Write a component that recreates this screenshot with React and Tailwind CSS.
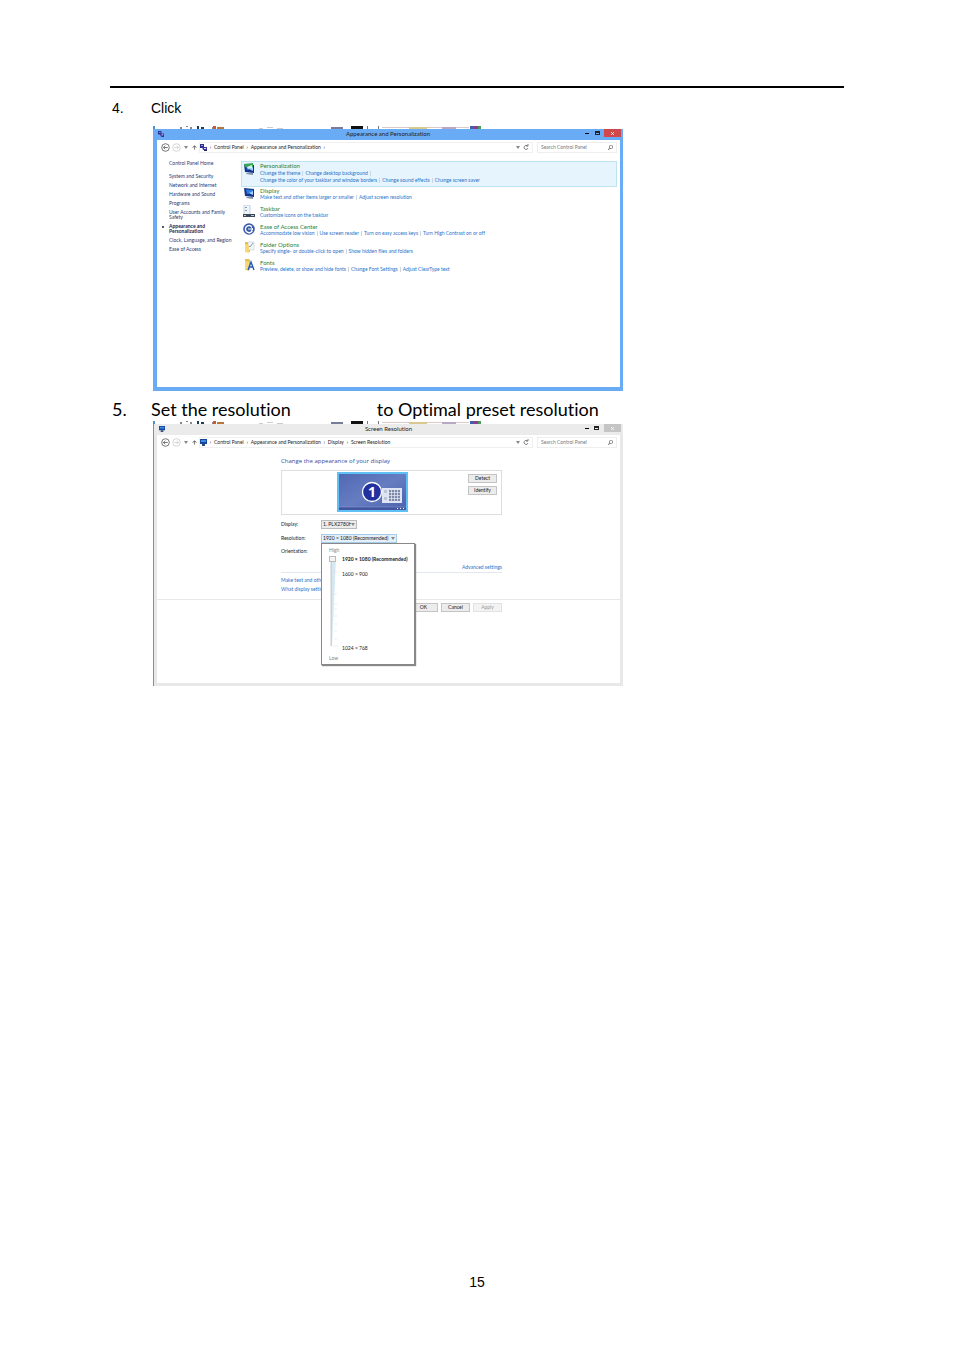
import { FaArrowUp, FaSearch } from "react-icons/fa";

const DesktopStrip = () => (
  <svg viewBox="0 0 470 3" preserveAspectRatio="none" className="block h-[3px] w-full">
    <rect width="470" height="3" fill="#fff" />
    <rect width="2" height="3" fill="#4d8fd0" />
    <path d="M27 1h2v2h-2zM33 0h2v1h-2zM37 1h2v2h-2zM59 1h2v2h-2z" fill="#888" />
    <path d="M44 0h2v3h-2zM48 1h3v2h-3z" fill="#1c3f52" />
    <path d="M60 0h3v3h-3z" fill="#d8572a" />
    <path d="M64 1h7v2h-7z" fill="#b8763c" />
    <path d="M106 2h4v1h-4zM114 1h6v1h-6zM124 2h6v1h-6z" fill="#ccc" />
    <path d="M178 1h12v2h-12z" fill="#777c9a" />
    <path d="M198 0h12v3h-12z" fill="#111" />
    <path d="M214 0h1v3h-1zM225 0h1v3h-1z" fill="#777" />
    <path d="M229 1h87v1h-87z" fill="#dcc9c9" />
    <path d="M256 1h18v2h-18z" fill="#d9c98f" />
    <path d="M289 1h14v2h-14z" fill="#b9a7c4" />
    <path d="M317 0h4v3h-4z" fill="#3d62a8" />
    <path d="M321 0h4v3h-4z" fill="#8b3c95" />
    <path d="M325 0h3v3h-3z" fill="#4c9a58" />
  </svg>
);

const MonitorIcon = ({ swirl }) => (
  <svg viewBox="0 0 12 12" className="size-full">
    <path d="M1 1 11 2v8L2 9z" fill="#12348c" />
    <path d="M3 2.500 10 3v3L4 7z" fill="#2f7fe0" />
    <path d="M6 6l4-2v4z" fill="#9fd0ff" />
    {swirl && <path d="M1 1 10 0v4L6 5 2 4z" fill="#3aa655" />}
    {swirl && <path d="M4 4l5-2v3L5 6z" fill="#d7f0ff" />}
    <path d="M4 10l6 0v2L3 11z" fill="#8292a8" />
  </svg>
);

const PanelIcon = () => (
  <svg viewBox="0 0 7 7" className="size-full">
    <path d="M0 0h4v4H0z" fill="#2b2f86" />
    <path d="M1 1h2v1H1z" fill="#8f9be0" />
    <path d="M2 3h5v3H3z" fill="#41379a" />
    <path d="M4 4h2v1H4z" fill="#d5d7f5" />
    <path d="M4 6h3v1H4z" fill="#26265e" />
  </svg>
);

const ScreenIcon = () => (
  <svg viewBox="0 0 7 7" className="size-full">
    <path d="M0 0h7v5H0z" fill="#17479e" />
    <path d="M1 1h5v2H1z" fill="#3d8ce0" />
    <path d="M2 5h3v2H2z" fill="#35506e" />
  </svg>
);

const TaskbarIcon = () => (
  <svg viewBox="0 0 12 12" className="size-full">
    <path d="M1 0h6v10H1z" fill="#f1f5f9" stroke="#a9b5c4" strokeWidth=".6" />
    <path d="M2 2h2v1H2zM2 5h2v1H2z" fill="#6f9fd4" />
    <path d="M0 9h12v3H0z" fill="#3c4757" />
    <path d="M1 10h2v1H1zM8 10h3v1H8z" fill="#b9c6d6" />
  </svg>
);

const EaseIcon = () => (
  <svg viewBox="0 0 12 12" className="size-full">
    <circle cx="6" cy="6" r="5.800" fill="#3558a8" />
    <path d="M8.800 3.800A3.600 3.600 0 1 0 9.400 7.400" fill="none" stroke="#fff" strokeWidth="1.400" />
    <path d="M5 6h5M8 4.400 10 6 8 7.600" fill="none" stroke="#fff" />
  </svg>
);

const FolderIcon = () => (
  <svg viewBox="0 0 12 12" className="size-full">
    <path d="M2 1h4l1 1v9H2z" fill="#e8c04f" />
    <path d="M5 1h6v8H5z" fill="#f4f6f8" stroke="#b5bdc6" strokeWidth=".5" />
    <path d="M6 5 7 6 10 2" fill="none" stroke="#7b9fcc" />
    <path d="M2 3l4 1v8L2 11z" fill="#f5d978" />
  </svg>
);

const FontsIcon = () => (
  <svg viewBox="0 0 12 12" className="size-full">
    <path d="M2 0h4l1 1v10H2z" fill="#e8c04f" />
    <path d="M2 2l4 1v9L2 11z" fill="#f5d978" />
    <path d="M5 11 8 3 11 11M6 8h4" fill="none" stroke="#2559b5" strokeWidth="1.400" />
  </svg>
);

const BackIcon = ({ className }) => (
  <svg viewBox="0 0 9 9" className={className} fill="none" stroke="currentColor" strokeWidth=".8">
    <circle cx="4.500" cy="4.500" r="3.800" />
    <path d="M6.800 4.500H2.400M4.200 2.700 2.400 4.500l1.800 1.800" />
  </svg>
);

const Caret = () => (
  <svg viewBox="0 0 4 3" className="h-[3px] w-1 shrink-0">
    <path d="M0 0h4L2 3z" fill="#888" />
  </svg>
);

const TitleBar = ({ title, icon, className, closeClass }) => (
  <div className={`grid h-[11px] grid-cols-3 items-start ${className}`}>
    <span className="mt-[2px] ml-[5px] size-[6px]">{icon}</span>
    <h2 className="text-center text-[6px] leading-[9px] text-[#222]">{title}</h2>
    <div className="mr-[2px] flex justify-end">
      <button aria-label="Minimize" className="flex h-2 w-[10px] items-end justify-center pb-[3px]">
        <span className="h-px w-1 bg-black" />
      </button>
      <button aria-label="Maximize" className="flex h-2 w-[10px] items-center justify-center">
        <span className="h-1 w-[5px] border border-t-2 border-[#222]" />
      </button>
      <button aria-label="Close" className={`ml-[2px] flex h-2 w-[17px] items-center justify-center text-white ${closeClass}`}>
        <svg viewBox="0 0 4 4" className="size-[3px]" stroke="currentColor"><path d="M0 0l4 4M4 0 0 4" /></svg>
      </button>
    </div>
  </div>
);

const AddressBar = ({ path, icon, trailing }) => (
  <div className="flex h-[14px] items-center pr-[3px] pl-1 text-[5px] leading-[7px] text-[#222]">
    <button aria-label="Back"><BackIcon className="size-[9px] text-[#555]" /></button>
    <button aria-label="Forward" className="ml-[2px]"><BackIcon className="size-[9px] rotate-180 text-[#ccc]" /></button>
    <button aria-label="Recent pages" className="ml-[3px]"><Caret /></button>
    <button aria-label="Up" className="ml-1"><FaArrowUp className="size-[5px] text-[#666]" /></button>
    <div className="ml-[2px] flex h-[11px] grow items-center border border-[#f0f0f0]">
      <span className="size-[7px]">{icon}</span>
      <nav className="flex grow items-center">
        {path.map((item) => (
          <span key={item} className="flex items-center">
            <span className="w-[7px] text-center">›</span>
            <a href="#" className="whitespace-nowrap">{item}</a>
          </span>
        ))}
        {trailing && <span className="w-[7px] text-center">›</span>}
      </nav>
      <Caret />
      <button aria-label="Refresh" className="mx-[3px]">
        <svg viewBox="0 0 6 6" className="size-[6px]" fill="none" stroke="#666" strokeWidth=".8">
          <path d="M4.500 2A2 2 0 1 0 5 4M5 0v2H3" />
        </svg>
      </button>
    </div>
    <label className="ml-1 flex h-[11px] w-20 items-center border border-[#eee] px-[3px]">
      <input aria-label="Search Control Panel" placeholder="Search Control Panel" className="w-0 grow placeholder:text-[#777]" />
      <FaSearch className="size-[5px] -scale-x-100 text-[#777]" />
    </label>
  </div>
);

const sideLinks = [
  "System and Security",
  "Network and Internet",
  "Hardware and Sound",
  "Programs",
  "User Accounts and Family Safety",
  "Appearance and Personalization",
  "Clock, Language, and Region",
  "Ease of Access",
];

const categories = [
  { name: "Display", icon: <MonitorIcon />, links: ["Make text and other items larger or smaller", "Adjust screen resolution"] },
  { name: "Taskbar", icon: <TaskbarIcon />, links: ["Customize icons on the taskbar"] },
  { name: "Ease of Access Center", icon: <EaseIcon />, links: ["Accommodate low vision", "Use screen reader", "Turn on easy access keys", "Turn High Contrast on or off"] },
  { name: "Folder Options", icon: <FolderIcon />, links: ["Specify single- or double-click to open", "Show hidden files and folders"] },
  { name: "Fonts", icon: <FontsIcon />, links: ["Preview, delete, or show and hide fonts", "Change Font Settings", "Adjust ClearType text"] },
];

const LinkRow = ({ links, open }) => (
  <div className="flex text-[5px] leading-[7px] whitespace-nowrap text-[#2a72c8]">
    {links.map((link, i) => (
      <span key={link} className="flex items-center">
        <a href="#">{link}</a>
        {(open || i < links.length - 1) && <span className="mx-[2px] h-[5px] w-px bg-[#ccd6e0]" />}
      </span>
    ))}
  </div>
);

const AppearanceWindow = () => (
  <div className="w-full max-w-[470px] font-['Lato',sans-serif]">
    <DesktopStrip />
    <div className="border-4 border-t-0 border-r-3 border-[#6aabf5]">
      <TitleBar title="Appearance and Personalization" icon={<PanelIcon />} className="-mr-[3px] -ml-1 bg-[#6aabf5]" closeClass="bg-[#d0484c]" />
      <AddressBar path={["Control Panel", "Appearance and Personalization"]} icon={<PanelIcon />} trailing />
      <div className="flex min-h-[233px] pt-[7px] pr-[3px]">
        <aside className="w-[84px] shrink-0 pl-3 text-[5px] text-[#2b3a73]">
          <a href="#" className="block leading-[5px]">Control Panel Home</a>
          <ul className="mt-[6px]">
            {sideLinks.map((link) => {
              const active = link.startsWith("Appearance");
              return (
                <li key={link} className={`relative py-[2px] leading-[5px] ${active ? "w-12 font-bold text-[#1b2350]" : "w-16"}`}>
                  {active && <span className="absolute top-1 -left-[7px] size-[2px] rounded-full bg-[#1b2350]" />}
                  <a href="#">{link}</a>
                </li>
              );
            })}
          </ul>
        </aside>
        <main className="grow">
          <section className="flex h-[26px] border border-[#bfe3f2] bg-[#e6f4fd] pl-px">
            <span className="mt-px mr-[5px] size-3"><MonitorIcon swirl /></span>
            <div>
              <h3 className="text-[6px] leading-[8px] text-[#2b8340]">Personalization</h3>
              <LinkRow links={["Change the theme", "Change desktop background"]} open />
              <LinkRow links={["Change the color of your taskbar and window borders", "Change sound effects", "Change screen saver"]} />
            </div>
          </section>
          {categories.map(({ name, icon, links }) => (
            <section key={name} className="flex h-[18px] pl-[2px]">
              <span className="mr-[5px] size-3">{icon}</span>
              <div>
                <h3 className="text-[6px] leading-[7px] text-[#2b8340]">{name}</h3>
                <LinkRow links={links} />
              </div>
            </section>
          ))}
        </main>
      </div>
    </div>
  </div>
);

const DisplayPreview = () => (
  <svg viewBox="0 0 71 40" className="h-10 w-[71px]">
    <defs>
      <linearGradient id="screen" x1="0" y1="0" x2="1" y2="1">
        <stop offset="0" stopColor="#5068b2" />
        <stop offset=".5" stopColor="#667dc2" />
        <stop offset="1" stopColor="#4a60ab" />
      </linearGradient>
    </defs>
    <rect x="1" y="1" width="69" height="38" fill="url(#screen)" stroke="#5fc0f5" strokeWidth="2" />
    <path d="M2 35h67v3H2z" fill="#41569f" />
    <path d="M2 35h67" stroke="#8ea3d8" strokeWidth=".5" />
    <path d="M60 36h1v1h-1zM63 36h1v1h-1zM66 36h1v1h-1z" fill="#fff" />
    <rect x="45" y="16" width="20" height="15" fill="#dfe5f2" />
    <path d="M47 18h3v3h-3zM47 25h3v3h-3z" fill="#bcc4d6" />
    <path d="M52 18h11v11H52z" fill="#7c89ab" />
    <path d="M52 20.500h11M52 23.500h11M52 26.500h11M54.500 18v11M57.500 18v11M60.500 18v11" stroke="#e9edf6" strokeWidth=".7" />
    <circle cx="35" cy="20" r="9.500" fill="#2131a0" stroke="#fff" strokeWidth="1.300" />
    <text x="35" y="25" textAnchor="middle" fontFamily="Open Sans" fontSize="14" fontWeight="700" fill="#fff">1</text>
  </svg>
);

const FormButton = ({ children, disabled }) => (
  <button
    disabled={disabled}
    className={`h-[9px] w-[29px] border text-[5px] leading-[7px] ${disabled ? "border-[#e2e2e2] bg-[#f3f3f3] text-[#999]" : "border-[#c4c4c4] bg-[#ececec] text-[#222]"}`}
  >
    {children}
  </button>
);

const Picker = ({ id, label, value, className }) => (
  <div className="flex h-[9px] items-center">
    <label htmlFor={id} className="w-10">{label}</label>
    <span className={`flex h-[9px] items-center border px-px ${className}`}>
      <select id={id} className="w-0 grow appearance-none">
        <option>{value}</option>
      </select>
      <Caret />
    </span>
  </div>
);

const ResolutionPopup = () => (
  <div className="absolute -top-[5px] left-10 z-10 flex h-[122px] w-[94px] flex-col border border-[#888] bg-white py-[2px] pl-[7px] shadow-[1px_1px_1px_#888]">
    <p className="leading-[8px] text-[#888]">High</p>
    <div className="flex h-[98px]">
      <span className="relative w-[13px]">
        <svg viewBox="0 0 13 98" className="h-full w-full">
          <path d="M2 4h5L3 92H2z" fill="#d5e8f1" />
          <path d="M2 4v88" stroke="#999" strokeWidth=".5" />
          <path d="M5 18h4M5 30h3M5 40h3M5 50h3M5 55h3M5 62h3M5 70h3M5 77h3M5 85h3M4 92h5" stroke="#d5dde2" strokeWidth=".5" />
        </svg>
        <input
          type="range"
          aria-label="Screen resolution"
          defaultValue="100"
          className="absolute top-[2px] left-0 h-[92px] w-[7px] appearance-none bg-transparent [direction:rtl] [writing-mode:vertical-lr] [&::-webkit-slider-thumb]:h-[6px] [&::-webkit-slider-thumb]:w-[7px] [&::-webkit-slider-thumb]:appearance-none [&::-webkit-slider-thumb]:border [&::-webkit-slider-thumb]:border-[#bbb] [&::-webkit-slider-thumb]:bg-[#f3f3f3]"
        />
      </span>
      <div className="flex flex-col whitespace-nowrap text-[#222]">
        <p className="mt-[2px] font-bold">1920 × 1080 (Recommended)</p>
        <p className="mt-2">1600 × 900</p>
        <p className="mt-auto">1024 × 768</p>
      </div>
    </div>
    <p className="mt-[2px] leading-[8px] text-[#888]">Low</p>
  </div>
);

const ResolutionWindow = () => (
  <div className="w-full max-w-[470px] font-['Lato',sans-serif]">
    <DesktopStrip />
    <div className="border-l border-[#5a9be0]">
      <div className="border-3 border-t-0 border-[#e8e8e8]">
        <TitleBar title="Screen Resolution" icon={<ScreenIcon />} className="-mx-[3px] bg-[#ebebeb]" closeClass="bg-[#c4c4c4]" />
        <AddressBar path={["Control Panel", "Appearance and Personalization", "Display", "Screen Resolution"]} icon={<ScreenIcon />} />
        <div className="min-h-[234px] pt-2 text-[5px] leading-[7px] text-[#222]">
          <div className="pl-31">
            <div className="w-[221px]">
              <h3 className="font-['Open_Sans',sans-serif] text-[6px] leading-[9px] text-[#2a4fa5]">Change the appearance of your display</h3>
              <div className="mt-1 flex h-[45px] border border-[#ddd] pt-px pr-1 pl-[55px]">
                <DisplayPreview />
                <div className="ml-auto flex flex-col gap-[3px] pt-[2px]">
                  <FormButton>Detect</FormButton>
                  <FormButton>Identify</FormButton>
                </div>
              </div>
              <form className="mt-[5px] flex flex-col gap-[5px]">
                <Picker id="display" label="Display:" value="1. PLX2780H" className="w-9 border-[#bbb] bg-[#ececec]" />
                <Picker id="resolution" label="Resolution:" value="1920 × 1080 (Recommended)" className="w-[76px] border-[#a9cbea] bg-[#e3effa]" />
                <div className="relative h-2">
                  <span>Orientation:</span>
                  <ResolutionPopup />
                </div>
              </form>
              <div className="mt-2 border-b border-[#e2e8ee] pb-px text-right text-[#2a72c8]">
                <a href="#">Advanced settings</a>
              </div>
              <div className="flex flex-col items-start gap-[2px] pt-1 whitespace-nowrap text-[#2a72c8]">
                <a href="#">Make text and other items larger or smaller</a>
                <a href="#">What display settings should I choose?</a>
              </div>
            </div>
          </div>
          <div className="mt-[6px] border-t border-[#e8e8e8] pt-[3px] pl-31">
            <div className="flex w-[221px] justify-end gap-[3px]">
              <FormButton>OK</FormButton>
              <FormButton>Cancel</FormButton>
              <FormButton disabled>Apply</FormButton>
            </div>
          </div>
        </div>
      </div>
    </div>
  </div>
);

export default function App() {
  return (
    <div className="flex min-h-screen flex-col bg-white px-[110px] pt-[86px] pb-[58px] font-['Liberation_Sans',sans-serif] text-black [font-variant-ligatures:none]">
      <hr className="border-t-2 border-black" />
      <ol className="pl-[2px]">
        <li className="mt-[10px] grid grid-cols-[39px_1fr] text-[14px] leading-5">
          <span>4.</span>
          <p>Click</p>
          <div className="col-start-2 mt-2 pl-[2px]"><AppearanceWindow /></div>
        </li>
        <li className="mt-[6px] grid grid-cols-[39px_1fr] font-['Lato',sans-serif] text-[18px] leading-6">
          <span>5.</span>
          <p className="flex gap-[86px]"><span>Set the resolution</span><span>to Optimal preset resolution</span></p>
          <div className="col-start-2 pl-[2px]"><ResolutionWindow /></div>
        </li>
      </ol>
      <footer className="mt-auto text-center text-[14px] leading-5">15</footer>
    </div>
  );
}
